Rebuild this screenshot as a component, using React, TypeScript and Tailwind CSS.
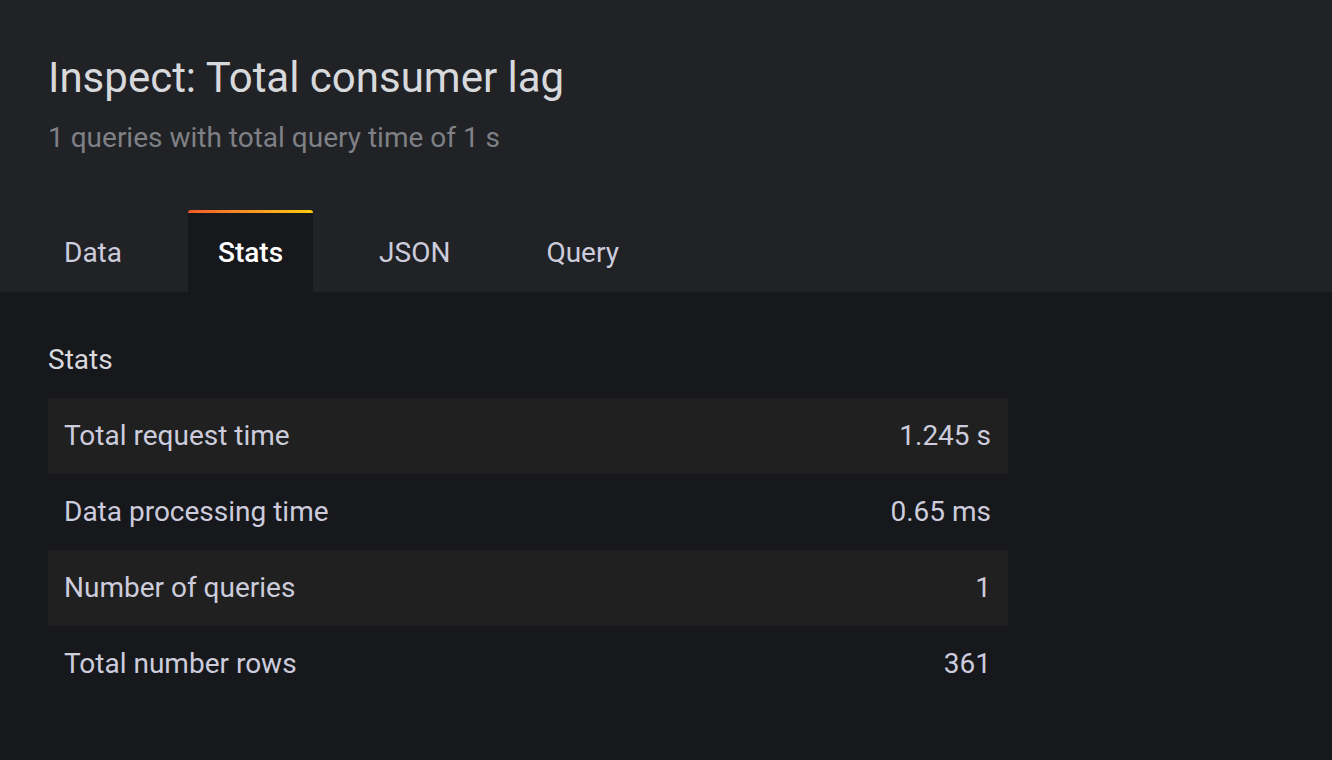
import React from 'react';

const tabs = ['Data', 'Stats', 'JSON', 'Query'];

const stats = [
  { label: 'Total request time', value: '1.245 s' },
  { label: 'Data processing time', value: '0.65 ms' },
  { label: 'Number of queries', value: '1' },
  { label: 'Total number rows', value: '361' },
];

export default function App() {
  return (
    <div className="min-h-screen w-full bg-[#17181c] font-['Roboto',sans-serif]">
      <div className="bg-[#212226]">
        <div className="pl-12 pt-[53px]">
          <h1 className="text-[42px] leading-[50px] text-[#d8d9dc]">Inspect: Total consumer lag</h1>
          <p className="mt-[17px] text-[28px] leading-9 text-[#7f8085]">1 queries with total query time of 1 s</p>
        </div>
        <div className="mt-[54px] flex h-[82px] gap-[36px] pl-[34px]">
          {tabs.map((tab) => {
            const active = tab === 'Stats';
            return (
              <div
                key={tab}
                className={
                  active
                    ? 'relative flex items-center rounded-t-[4px] bg-[#17181c] px-[30px] pt-[3px] text-[28px] font-medium text-white'
                    : 'flex items-center px-[30px] pt-[3px] text-[28px] text-[#ccccdc]'
                }
              >
                {active && (
                  <div className="absolute left-0 right-0 top-0 h-[3px] rounded-t-[4px] bg-gradient-to-r from-[#f05a28] to-[#fbca0a]" />
                )}
                {tab}
              </div>
            );
          })}
        </div>
      </div>
      <div className="px-12 pt-[50px]">
        <h3 className="mb-5 text-[28px] leading-9 text-[#d8d9dc]">Stats</h3>
        <div className="w-[960px]">
          {stats.map((row, i) => (
            <div
              key={row.label}
              className={`flex h-[76px] items-center justify-between pl-4 pr-[17px] text-[28px] text-[#ccccdc] ${
                i % 2 === 0 ? 'bg-[#202020]' : ''
              }`}
            >
              <span>{row.label}</span>
              <span>{row.value}</span>
            </div>
          ))}
        </div>
      </div>
    </div>
  );
}
